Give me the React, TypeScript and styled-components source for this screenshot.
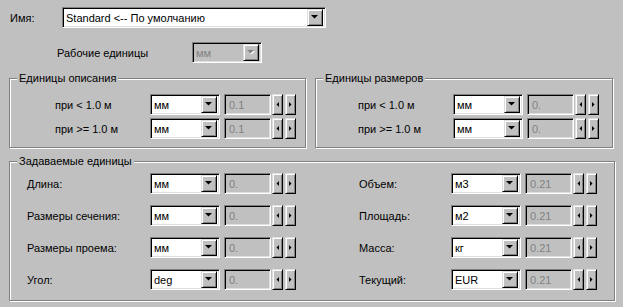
import React from 'react';
import styled, { createGlobalStyle } from 'styled-components';

const Global = createGlobalStyle`
  html, body {
    margin: 0;
    padding: 0;
    background: #c0c0c0;
  }
  body {
    font-family: "Liberation Sans", Arial, sans-serif;
    font-size: 11px;
    color: #000;
  }
`;

const Dialog = styled.div`
  width: 623px;
  height: 307px;
  box-sizing: border-box;
  padding: 7px 10px 0 9px;
  background: #c0c0c0;
`;

const TopRow = styled.div`
  display: flex;
  align-items: center;
  padding-left: 1px;
`;

const NameLabel = styled.span`
  width: 52px;
`;

const WorkRow = styled.div`
  display: flex;
  align-items: center;
  margin-top: 14px;
  padding-left: 48px;
`;

const WorkLabel = styled.span`
  width: 135px;
`;

const GroupsRow = styled.div`
  display: flex;
  gap: 9px;
  margin-top: 15px;
`;

const Group = styled.div<{ $w: number; $mt?: number }>`
  position: relative;
  width: ${p => p.$w}px;
  margin-top: ${p => p.$mt ?? 0}px;
  box-sizing: border-box;
  border: 1px solid #808080;
  box-shadow: inset 1px 1px 0 #fff, 1px 1px 0 #fff;
`;

const GroupTitle = styled.span`
  position: absolute;
  top: -7px;
  left: 7px;
  padding: 0 2px;
  background: #c0c0c0;
  line-height: 13px;
`;

const Rows = styled.div<{ $pl: number; $gap: number; $pt: number; $pb: number }>`
  display: flex;
  flex-direction: column;
  gap: ${p => p.$gap}px;
  padding: ${p => p.$pt}px 0 ${p => p.$pb}px ${p => p.$pl}px;
`;

const Row = styled.div`
  display: flex;
  align-items: center;
  height: 21px;
`;

const RowLabel = styled.span<{ $w: number }>`
  width: ${p => p.$w}px;
  white-space: nowrap;
`;

const Columns = styled.div`
  display: flex;
`;

const Sunken = styled.div<{ $w: number; $bg?: string }>`
  position: relative;
  width: ${p => p.$w}px;
  height: 21px;
  box-sizing: border-box;
  display: flex;
  align-items: center;
  border-style: solid;
  border-width: 1px;
  border-color: #808080 #fff #fff #808080;
  box-shadow: inset 1px 1px 0 #000, inset -1px -1px 0 #dfdfdf;
  background: ${p => p.$bg ?? '#fff'};
  padding: 2px;
`;

const EditBox = styled(Sunken)`
  margin-left: 4px;
`;

const ComboText = styled.span<{ $disabled?: boolean }>`
  flex: 1;
  padding-left: 1px;
  padding-top: 1px;
  color: ${p => (p.$disabled ? '#808080' : '#000')};
  white-space: nowrap;
  overflow: hidden;
`;

const Raised = styled.div<{ $w: number; $h: number }>`
  width: ${p => p.$w}px;
  height: ${p => p.$h}px;
  box-sizing: border-box;
  display: flex;
  align-items: center;
  justify-content: center;
  background: #c0c0c0;
  border-style: solid;
  border-width: 1px;
  border-color: #dfdfdf #000 #000 #dfdfdf;
  box-shadow: inset 1px 1px 0 #fff, inset -1px -1px 0 #808080;
`;

const EditText = styled.span`
  padding-left: 2px;
  padding-top: 1px;
  color: #808080;
`;

const Cluster = styled.div`
  display: flex;
  align-items: center;
`;

const Spin = styled.div`
  display: flex;
  gap: 2px;
  margin-left: 1px;
`;

const DownArrow = ({ disabled }: { disabled?: boolean }) => (
  <svg width="8" height="5" viewBox="0 0 8 5">
    {disabled && <path d="M1 1h7L4.5 4.5z" fill="#fff" />}
    <path d="M0 0h7L3.5 3.5z" fill={disabled ? '#808080' : '#000'} />
  </svg>
);

const SideArrow = ({ dir }: { dir: 'l' | 'r' }) => (
  <svg width="3" height="5" viewBox="0 0 3 5">
    {dir === 'l' ? <path d="M3 0v5L0.5 2.5z" fill="#000" /> : <path d="M0 0v5L2.5 2.5z" fill="#000" />}
  </svg>
);

const Combo = ({ value, w, disabled }: { value: string; w: number; disabled?: boolean }) => (
  <Sunken $w={w} $bg={disabled ? '#c0c0c0' : '#fff'}>
    <ComboText $disabled={disabled}>{value}</ComboText>
    <Raised $w={16} $h={17}>
      <DownArrow disabled={disabled} />
    </Raised>
  </Sunken>
);

const UnitControl = ({ unit, value }: { unit: string; value: string }) => (
  <Cluster>
    <Combo value={unit} w={70} />
    <EditBox $w={47} $bg="#c0c0c0">
      <EditText>{value}</EditText>
    </EditBox>
    <Spin>
      <Raised $w={11} $h={21}>
        <SideArrow dir="l" />
      </Raised>
      <Raised $w={11} $h={21}>
        <SideArrow dir="r" />
      </Raised>
    </Spin>
  </Cluster>
);

const App: React.FC = () => {
  const left = [
    { label: 'Длина:', unit: 'мм' },
    { label: 'Размеры сечения:', unit: 'мм' },
    { label: 'Размеры проема:', unit: 'мм' },
    { label: 'Угол:', unit: 'deg' },
  ];
  const right = [
    { label: 'Объем:', unit: 'м3' },
    { label: 'Площадь:', unit: 'м2' },
    { label: 'Масса:', unit: 'кг' },
    { label: 'Текущий:', unit: 'EUR' },
  ];

  return (
    <Dialog>
      <Global />
      <TopRow>
        <NameLabel>Имя:</NameLabel>
        <Combo value="Standard <-- По умолчанию" w={264} />
      </TopRow>
      <WorkRow>
        <WorkLabel>Рабочие единицы</WorkLabel>
        <Combo value="мм" w={70} disabled />
      </WorkRow>

      <GroupsRow>
        <Group $w={298}>
          <GroupTitle>Единицы описания</GroupTitle>
          <Rows $pl={45} $gap={3} $pt={15} $pb={8}>
            <Row>
              <RowLabel $w={95}>при &lt; 1.0 м</RowLabel>
              <UnitControl unit="мм" value="0.1" />
            </Row>
            <Row>
              <RowLabel $w={95}>при &gt;= 1.0 м</RowLabel>
              <UnitControl unit="мм" value="0.1" />
            </Row>
          </Rows>
        </Group>
        <Group $w={299}>
          <GroupTitle>Единицы размеров</GroupTitle>
          <Rows $pl={42} $gap={3} $pt={15} $pb={8}>
            <Row>
              <RowLabel $w={95}>при &lt; 1.0 м</RowLabel>
              <UnitControl unit="мм" value="0." />
            </Row>
            <Row>
              <RowLabel $w={95}>при &gt;= 1.0 м</RowLabel>
              <UnitControl unit="мм" value="0." />
            </Row>
          </Rows>
        </Group>
      </GroupsRow>

      <Group $w={606} $mt={13}>
        <GroupTitle>Задаваемые единицы</GroupTitle>
        <Columns>
          <Rows $pl={17} $gap={11} $pt={11} $pb={10}>
            {left.map((r, i) => (
              <Row key={i}>
                <RowLabel $w={123}>{r.label}</RowLabel>
                <UnitControl unit={r.unit} value="0." />
              </Row>
            ))}
          </Rows>
          <Rows $pl={63} $gap={11} $pt={11} $pb={10}>
            {right.map((r, i) => (
              <Row key={i}>
                <RowLabel $w={92}>{r.label}</RowLabel>
                <UnitControl unit={r.unit} value="0.21" />
              </Row>
            ))}
          </Rows>
        </Columns>
      </Group>
    </Dialog>
  );
};

export default App;
